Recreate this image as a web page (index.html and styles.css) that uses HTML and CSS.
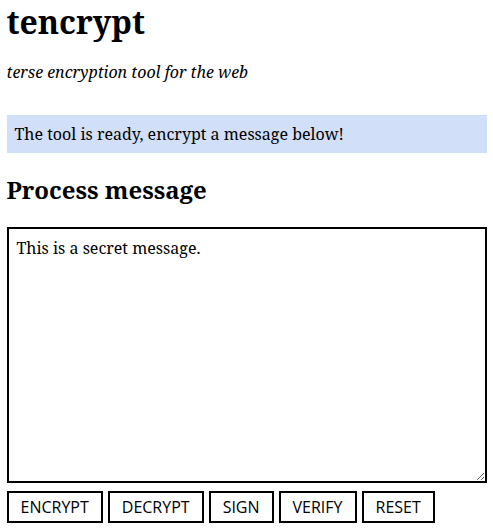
FILE: index.html
```html
<!DOCTYPE html>
<html lang="en">
<head>
<meta charset="utf-8">
<title>tencrypt</title>
<link rel="stylesheet" href="styles.css">
</head>
<body>
<main class="page">
  <h1 class="title">tencrypt</h1>
  <p class="tagline">terse encryption tool for the web</p>
  <div class="notice">The tool is ready, encrypt a message below!</div>
  <h2 class="section-title">Process message</h2>
  <textarea class="message">This is a secret message.</textarea>
  <div class="actions">
    <button class="btn">Encrypt</button>
    <button class="btn">Decrypt</button>
    <button class="btn">Sign</button>
    <button class="btn">Verify</button>
    <button class="btn">Reset</button>
  </div>
</main>
</body>
</html>
```

FILE: styles.css
```css
html, body {
  margin: 0;
  padding: 0;
  background: #fff;
}
body {
  font-family: "Noto Serif", "DejaVu Serif", serif;
  font-size: 16px;
  color: #000;
}
.page {
  max-width: 480px;
  margin: 0 auto;
}
.title {
  font-size: 32px;
  font-weight: bold;
  margin: 0;
  line-height: 44px;
}
.tagline {
  font-style: italic;
  margin: 16px 0 0;
  line-height: 24px;
}
.notice {
  margin-top: 31px;
  background: #d1dff9;
  padding: 8px 8px;
  line-height: 22px;
}
.section-title {
  font-size: 24px;
  font-weight: bold;
  margin: 20px 0 0;
  line-height: 34px;
}
.message {
  display: block;
  box-sizing: border-box;
  width: 100%;
  height: 256px;
  margin-top: 20px;
  border: 2px solid #000;
  padding: 8px;
  font-family: "Noto Serif", "DejaVu Serif", serif;
  font-size: 16px;
  line-height: 22px;
  color: #000;
  background: #fff;
  resize: vertical;
  outline: none;
}
.actions {
  display: flex;
  gap: 5px;
  margin-top: 8px;
}
.btn {
  font-family: "Open Sans", "Noto Sans", sans-serif;
  font-size: 16px;
  text-transform: uppercase;
  background: #fff;
  color: #000;
  border: 2px solid #000;
  border-radius: 0;
  padding: 3px 12px;
  line-height: 22px;
  margin: 0;
}
```
